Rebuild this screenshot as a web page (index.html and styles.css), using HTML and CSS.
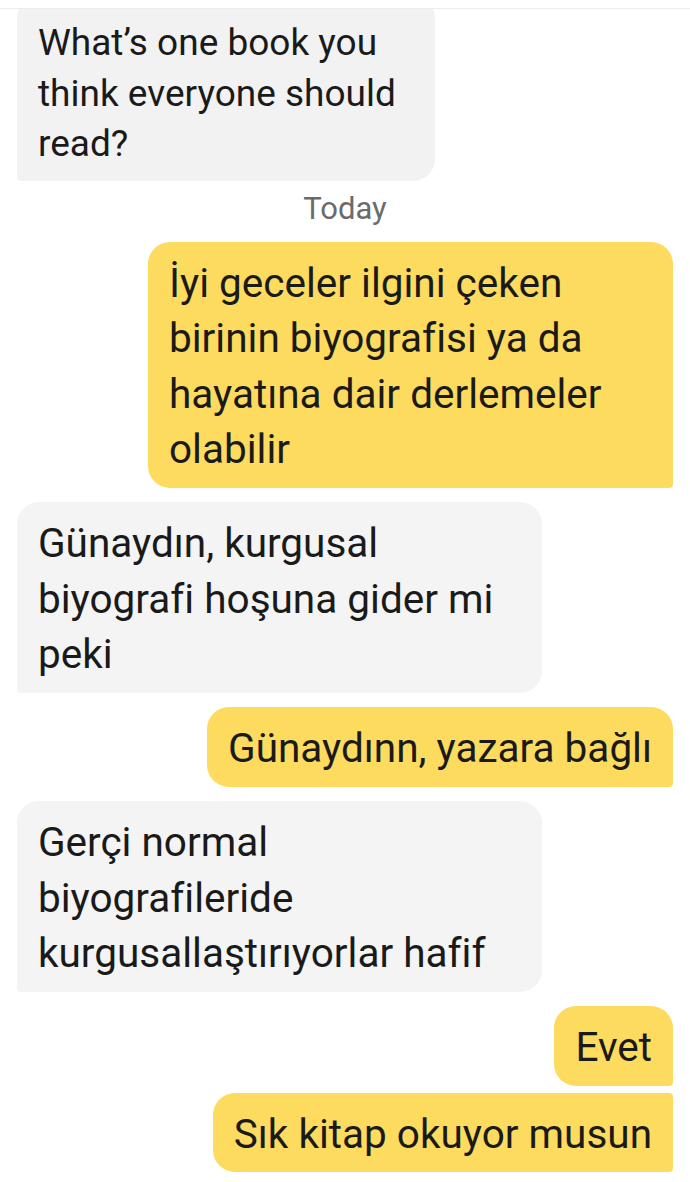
FILE: index.html
```html
<!DOCTYPE html>
<html lang="tr">
<head>
<meta charset="utf-8">
<title>Chat</title>
<link rel="stylesheet" href="styles.css">
</head>
<body>
<div class="topbar"></div>
<main class="chat">
  <div class="bubble theirs first">What’s one book you think everyone should read?</div>
  <div class="day">Today</div>
  <div class="bubble mine">İyi geceler ilgini çeken birinin biyografisi ya da hayatına dair derlemeler olabilir</div>
  <div class="bubble theirs">Günaydın, kurgusal biyografi hoşuna gider mi peki</div>
  <div class="bubble mine">Günaydınn, yazara bağlı</div>
  <div class="bubble theirs">Gerçi normal biyografileride kurgusallaştırıyorlar hafif</div>
  <div class="bubble mine">Evet</div>
  <div class="bubble mine grouped">Sık kitap okuyor musun</div>
</main>
</body>
</html>
```

FILE: styles.css
```css
html, body {
  margin: 0;
  padding: 0;
  background: #ffffff;
}

body {
  width: 690px;
  height: 1182px;
  overflow: hidden;
  font-family: Roboto, "Noto Sans", sans-serif;
  color: #1a1a1a;
}

.topbar {
  height: 8px;
  border-bottom: 1px solid #ececec;
}

.chat {
  height: 1173px;
  overflow: hidden;
  display: flex;
  flex-direction: column;
  gap: 14.5px;
  padding: 0 17px;
  box-sizing: border-box;
}

.bubble {
  max-width: 525px;
  box-sizing: border-box;
  padding: 14px 21px 10px;
  font-size: 40.5px;
  line-height: 55.5px;
  border-radius: 22px;
}

.theirs {
  align-self: flex-start;
  background: #f4f4f4;
  border-bottom-left-radius: 4px;
}

.mine {
  align-self: flex-end;
  background: #fddb5f;
  border-bottom-right-radius: 4px;
}

.mine.grouped {
  margin-top: -7.5px;
  border-top-right-radius: 4px;
}

.first {
  max-width: 418px;
  margin-top: -13px;
  padding: 22px 21px 11px;
  font-size: 37px;
  line-height: 50.5px;
  background: #f2f2f2;
}

.day {
  align-self: center;
  font-size: 31px;
  line-height: 28px;
  padding-bottom: 4px;
  color: #6b6b6b;
}
```
